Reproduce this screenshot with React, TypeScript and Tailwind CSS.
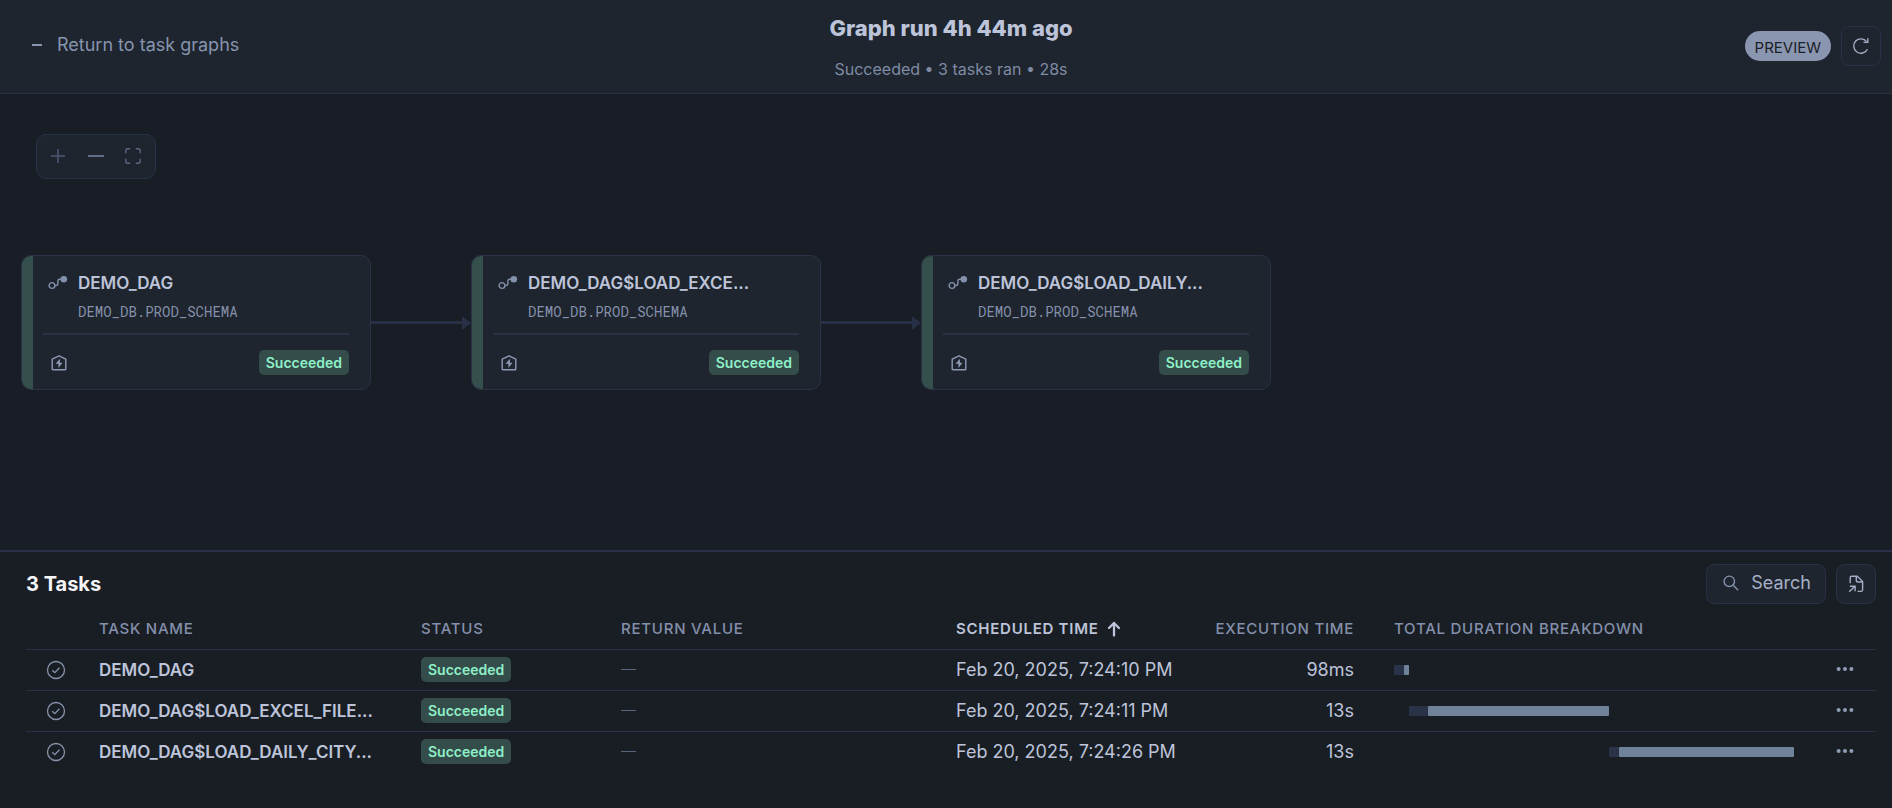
type Task = {
  name: string;
  label: string;
  scheduled: string;
  execution: string;
  offset: number;
  queued: number;
  running: number;
};

const tasks: Task[] = [
  { name: 'DEMO_DAG', label: 'DEMO_DAG', scheduled: 'Feb 20, 2025, 7:24:10 PM', execution: '98ms', offset: 0, queued: 2.5, running: 1.25 },
  { name: 'DEMO_DAG$LOAD_EXCE...', label: 'DEMO_DAG$LOAD_EXCEL_FILE...', scheduled: 'Feb 20, 2025, 7:24:11 PM', execution: '13s', offset: 3.75, queued: 4.75, running: 45.25 },
  { name: 'DEMO_DAG$LOAD_DAILY...', label: 'DEMO_DAG$LOAD_DAILY_CITY...', scheduled: 'Feb 20, 2025, 7:24:26 PM', execution: '13s', offset: 53.75, queued: 2.5, running: 43.75 },
];

function StatusBadge() {
  return (
    <span className="inline-flex h-[25px] items-center rounded-[5px] bg-[#344c4a] px-[7px] text-[14px] font-semibold leading-[20px] text-[#8ff0c8]">
      Succeeded
    </span>
  );
}

function TaskIcon() {
  return (
    <svg width="20" height="16" viewBox="0 0 20 16" fill="none" stroke="#8391ac" strokeWidth="1.4" aria-hidden="true">
      <circle cx="4" cy="10.5" r="2.9" />
      <path d="M7 10.5h1.2q1.7 0 1.7-1.7V6q0-1.8 1.8-1.8h1.5" />
      <circle cx="15.8" cy="4.2" r="3.3" fill="#8391ac" stroke="none" />
    </svg>
  );
}

function ServerlessIcon() {
  return (
    <svg width="16" height="16" viewBox="0 0 16 16" fill="none" stroke="#8f9ab5" strokeWidth="1.4" strokeLinejoin="round" aria-hidden="true">
      <path d="M1.2 4.2 8 .9l6.8 3.3v9.7q0 .9-.9.9H2.1q-.9 0-.9-.9z" />
      <path d="M8.9 3.8 4.6 8.8h2.8v4.1l4.1-5.2H8.9z" fill="#8f9ab5" stroke="none" />
    </svg>
  );
}

function TaskNode({ name }: { name: string }) {
  return (
    <article className="flex w-[350px] shrink-0 overflow-hidden rounded-[10px] border border-[#2a3346] bg-[#1e252e]">
      <div className="w-[11px] shrink-0 bg-[#354f4c]" />
      <div className="flex min-w-0 flex-1 flex-col pb-[14px] pl-[10px] pr-[21px] pt-[15px]">
        <div className="flex items-center gap-[10px] pl-[5px]">
          <TaskIcon />
          <h2 className="truncate text-[17px] font-semibold leading-[24px] text-[#bdc4d9]">{name}</h2>
        </div>
        <p className="pl-[35px] pt-[7px] font-['Roboto_Mono','Liberation_Mono',monospace] text-[14px] leading-[20px] text-[#8591ab]">
          DEMO_DB.PROD_SCHEMA
        </p>
        <div className="mt-[11px] border-t-2 border-[#2a3246]" />
        <div className="mt-[15px] flex items-center justify-between pl-2">
          <ServerlessIcon />
          <StatusBadge />
        </div>
      </div>
    </article>
  );
}

function Connector() {
  return (
    <div className="flex w-[100px] shrink-0 items-center">
      <div className="h-[3px] flex-1 bg-[#283046]" />
      <svg width="9" height="14" viewBox="0 0 9 14" fill="#283046" aria-hidden="true">
        <path d="M0 0 9 7 0 14z" />
      </svg>
    </div>
  );
}

const headCell = 'p-0 pb-[2px] text-left text-[15px] font-medium leading-[20px] tracking-wider';

export default function App() {
  return (
    <div className="flex min-h-screen flex-col bg-[#191e25] font-['Inter',sans-serif] text-[#bdc4d9]">
      <header className="grid min-h-[94px] grid-cols-[1fr_auto_1fr] items-center border-b border-[#2a3042] bg-[#1e252e] pl-[21px] pr-[11px]">
        <a href="#task-graphs" className="flex items-center gap-[15px] justify-self-start pb-[3px] pl-[11px] text-[18px] leading-[24px] text-[#8794ae]">
          <span className="h-[2px] w-[10px] bg-[#8794ae]" />
          Return to task graphs
        </a>
        <div className="text-center">
          <h1 className="text-[22px] font-extrabold leading-[32px] text-[#bdc4d9]">Graph run 4h 44m ago</h1>
          <p className="mt-[13px] text-[16px] leading-[24px] text-[#7f8ba5]">Succeeded • 3 tasks ran • 28s</p>
        </div>
        <div className="flex items-center gap-[10px] justify-self-end pb-[2px]">
          <span className="flex h-[30px] items-center rounded-full bg-[#8a96b0] px-[10px] pt-[5px] text-[15px] leading-[20px] text-[#1b2028]">PREVIEW</span>
          <button type="button" aria-label="Refresh" className="flex size-[40px] items-center justify-center rounded-lg border border-[#2a3048]">
            <svg width="18" height="18" viewBox="0 0 18 18" fill="none" stroke="#a3adc3" strokeWidth="1.4" aria-hidden="true">
              <path d="M15.4 12.2A7.2 7.2 0 1 1 14.6 4.6" />
              <path d="M15.8 1.2v4.2h-4.2" />
            </svg>
          </button>
        </div>
      </header>

      <main className="flex flex-1 flex-col overflow-hidden bg-[#191d25]">
        <div className="flex flex-col items-start pl-9 pt-10">
          <div className="flex h-[45px] w-[120px] items-center justify-between rounded-[10px] border border-[#283247] bg-[#1e252e] pb-[2px] pl-[12px] pr-[13px]">
            <button type="button" aria-label="Zoom in" className="flex size-[18px] items-center justify-center">
              <svg width="16" height="16" viewBox="0 0 16 16" stroke="#4e5873" strokeWidth="1.6" aria-hidden="true">
                <path d="M8 1v14M1 8h14" />
              </svg>
            </button>
            <button type="button" aria-label="Zoom out" className="flex size-[18px] items-center justify-center">
              <svg width="16" height="16" viewBox="0 0 16 16" stroke="#626c86" strokeWidth="2" aria-hidden="true">
                <path d="M0 8h16" />
              </svg>
            </button>
            <button type="button" aria-label="Fit to screen" className="flex size-[18px] items-center justify-center">
              <svg width="16" height="16" viewBox="0 0 16 16" fill="none" stroke="#5d6783" strokeWidth="1.4" aria-hidden="true">
                <path d="M.8 5.2V2.8q0-2 2-2h2.4M10.8.8h2.4q2 0 2 2v2.4M15.2 10.8v2.4q0 2-2 2h-2.4M5.2 15.2H2.8q-2 0-2-2v-2.4" />
              </svg>
            </button>
          </div>
        </div>
        <div className="flex pb-8 pl-[21px] pt-[76px]">
          <TaskNode name={tasks[0].name} />
          <Connector />
          <TaskNode name={tasks[1].name} />
          <Connector />
          <TaskNode name={tasks[2].name} />
        </div>
      </main>

      <section className="border-t-2 border-[#2a3146] bg-[#191e25] pb-9 pl-[26px] pr-4 pt-3">
        <div className="flex items-center justify-between">
          <h2 className="text-[20px] font-bold leading-[28px] text-[#f5f6f8]">3 Tasks</h2>
          <div className="flex gap-[10px]">
            <button type="button" className="flex h-10 items-center gap-[12px] rounded-lg border border-[#2a3146] bg-[#1e252e] pb-[2px] pl-[16px] pr-[14px] text-[18px] leading-[24px] text-[#a6b0c8]">
              <svg width="16" height="16" viewBox="0 0 16 16" fill="none" stroke="#8391aa" strokeWidth="1.4" aria-hidden="true">
                <circle cx="6.3" cy="6.3" r="5.2" />
                <path d="m10.2 10.2 5 5" />
              </svg>
              Search
            </button>
            <button type="button" aria-label="Open details" className="flex size-10 items-center justify-center rounded-lg border border-[#2a3146] bg-[#1e252e]">
              <svg width="18" height="18" viewBox="0 0 18 18" fill="none" stroke="#a3adc4" strokeWidth="1.4" aria-hidden="true">
                <path d="M3.2 8.2V2.8q0-1.6 1.6-1.6h5.5l5.3 5.3v8.3q0 1.6-1.6 1.6h-3.4" />
                <path d="M9.3 1.2v4q0 1.8 1.8 1.8h4.5" />
                <path d="M2.2 16.8 8 11.2M2.8 11.2h5.3v5" />
              </svg>
            </button>
          </div>
        </div>

        <table className="mt-[7px] w-full table-fixed border-collapse">
          <colgroup>
            <col className="w-[73px]" />
            <col className="w-[322px]" />
            <col className="w-[200px]" />
            <col className="w-[335px]" />
            <col className="w-[250px]" />
            <col className="w-[148px]" />
            <col />
            <col className="w-[82px]" />
          </colgroup>
          <thead>
            <tr className="h-[38px] border-b border-[#2a3146] align-middle text-[#8490ab]">
              <td />
              <th scope="col" className={headCell}>TASK NAME</th>
              <th scope="col" className={headCell}>STATUS</th>
              <th scope="col" className={headCell}>RETURN VALUE</th>
              <th scope="col" aria-sort="ascending" className={headCell}>
                <button type="button" className="flex items-center gap-2 font-semibold tracking-wider text-[#bdc4d9]">
                  SCHEDULED TIME
                  <svg width="14" height="16" viewBox="0 0 14 16" fill="none" stroke="#bdc4d9" strokeWidth="2.3" strokeLinecap="round" strokeLinejoin="round" aria-hidden="true">
                    <path d="M7 14.5V2M2 7l5-5 5 5" />
                  </svg>
                </button>
              </th>
              <th scope="col" className="whitespace-nowrap p-0 pb-[2px] text-right text-[15px] font-medium leading-[20px] tracking-wider">EXECUTION TIME</th>
              <th scope="col" className="p-0 pb-[2px] pl-10 text-left text-[15px] font-medium leading-[20px] tracking-wider">TOTAL DURATION BREAKDOWN</th>
              <td />
            </tr>
          </thead>
          <tbody>
            {tasks.map((task) => (
              <tr key={task.label} className="h-[41px] border-b border-[#2a3146] text-[18px] leading-[24px] last:border-b-0">
                <td className="p-0 pl-5">
                  <svg width="20" height="20" viewBox="0 0 20 20" fill="none" stroke="#8793ab" strokeWidth="1.3" aria-hidden="true">
                    <circle cx="10" cy="10" r="8.5" />
                    <path d="m6.3 10.3 2.5 2.4 4.7-5" />
                  </svg>
                </td>
                <td className="p-0 text-[17px] font-semibold">{task.label}</td>
                <td className="p-0">
                  <div className="flex"><StatusBadge /></div>
                </td>
                <td className="p-0">
                  <div className="h-px w-[15px] bg-[#5a6680]" />
                </td>
                <td className="p-0">{task.scheduled}</td>
                <td className="p-0 text-right">{task.execution}</td>
                <td className="p-0 pl-10">
                  <div className="flex h-[10px]">
                    <div style={{ width: `${task.offset}%` }} />
                    <div className="rounded-l-[1px] bg-[#2a3248]" style={{ width: `${task.queued}%` }} />
                    <div className="rounded-[1px] bg-[#71839b]" style={{ width: `${task.running}%` }} />
                  </div>
                </td>
                <td className="p-0 pb-[2px] pl-[42px]">
                  <button type="button" aria-label={`Actions for ${task.label}`} className="flex h-5 items-center">
                    <svg width="18" height="4" viewBox="0 0 18 4" fill="#909bb5" aria-hidden="true">
                      <circle cx="2.6" cy="2" r="2" />
                      <circle cx="9" cy="2" r="2" />
                      <circle cx="15.4" cy="2" r="2" />
                    </svg>
                  </button>
                </td>
              </tr>
            ))}
          </tbody>
        </table>
      </section>
    </div>
  );
}
